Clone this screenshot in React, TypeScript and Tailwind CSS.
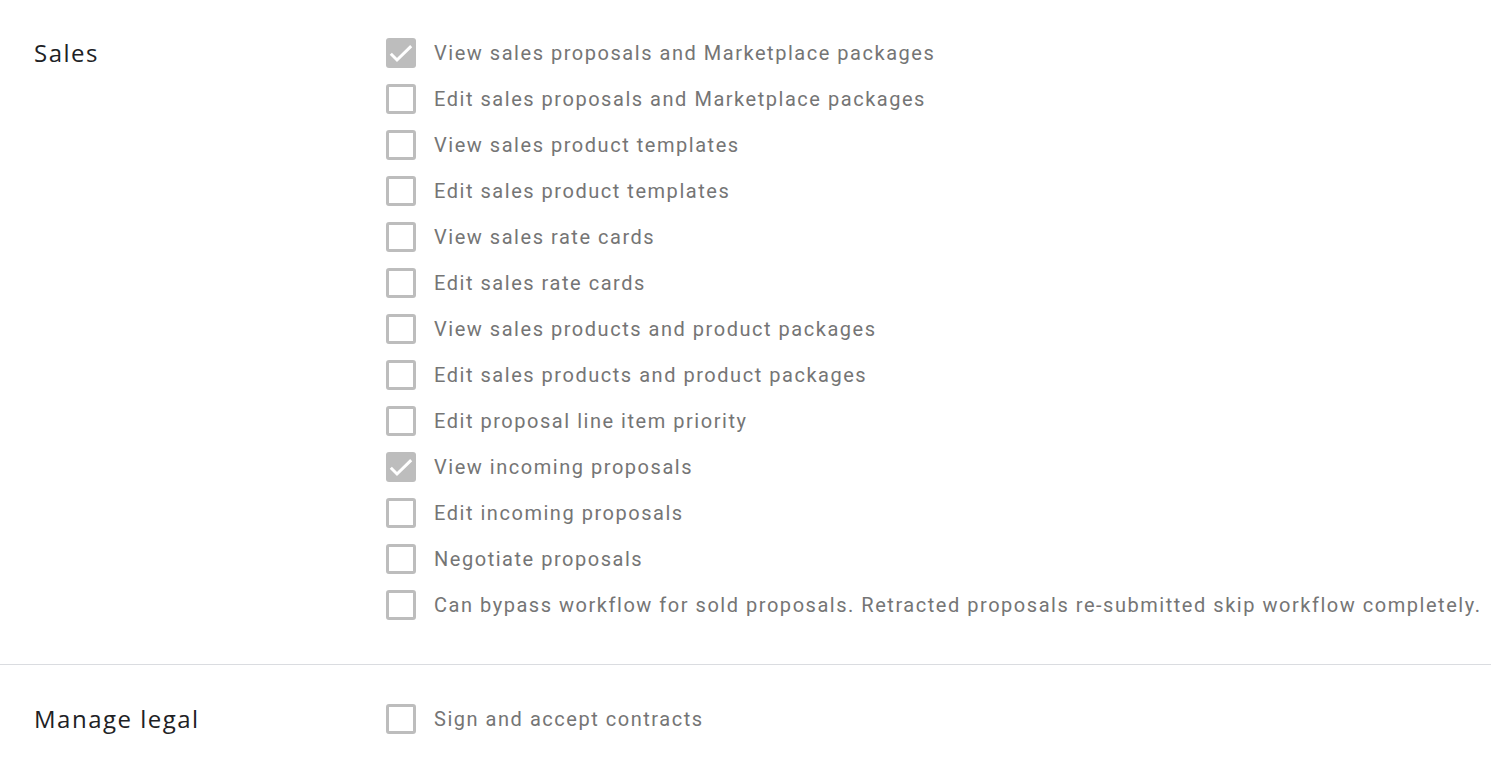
import React from 'react';

type Perm = { label: string; checked?: boolean };

const sales: Perm[] = [
  { label: 'View sales proposals and Marketplace packages', checked: true },
  { label: 'Edit sales proposals and Marketplace packages' },
  { label: 'View sales product templates' },
  { label: 'Edit sales product templates' },
  { label: 'View sales rate cards' },
  { label: 'Edit sales rate cards' },
  { label: 'View sales products and product packages' },
  { label: 'Edit sales products and product packages' },
  { label: 'Edit proposal line item priority' },
  { label: 'View incoming proposals', checked: true },
  { label: 'Edit incoming proposals' },
  { label: 'Negotiate proposals' },
  { label: 'Can bypass workflow for sold proposals. Retracted proposals re-submitted skip workflow completely.' },
];

function Box({ checked }: { checked?: boolean }) {
  if (checked) {
    return (
      <div className="w-[30px] h-[30px] rounded-[3px] bg-[#bdbdbd] shrink-0">
        <svg width="30" height="30" viewBox="0 0 30 30" fill="none">
          <path d="M4.8 15.8l6.2 6.2L25.2 8.2" stroke="#fff" strokeWidth="3" />
        </svg>
      </div>
    );
  }
  return <div className="w-[30px] h-[30px] rounded-[3px] border-[3px] border-[#bdbdbd] shrink-0" />;
}

function Row({ p }: { p: Perm }) {
  return (
    <div className="h-[46px] flex items-center">
      <div className="w-[48px]">
        <Box checked={p.checked} />
      </div>
      <span className="text-[20px] tracking-[1.53px] text-[#757575] whitespace-nowrap">{p.label}</span>
    </div>
  );
}

function Section({ title, items, className }: { title: string; items: Perm[]; className: string }) {
  return (
    <div className={`flex ${className}`}>
      <div
        className="w-[386px] pl-[34px] h-[46px] flex items-center text-[24px] tracking-[1.5px] text-[#202124]"
        style={{ fontFamily: '"Open Sans", Roboto, sans-serif' }}
      >
        {title}
      </div>
      <div className="flex flex-col">
        {items.map((p) => (
          <Row key={p.label} p={p} />
        ))}
      </div>
    </div>
  );
}

export default function App() {
  return (
    <div className="w-[1491px] h-[773px] bg-white overflow-hidden" style={{ fontFamily: 'Roboto, "Noto Sans", sans-serif' }}>
      <Section title="Sales" items={sales} className="pt-[30px] pb-[36px] border-b border-[#dadce0]" />
      <Section title="Manage legal" items={[{ label: 'Sign and accept contracts' }]} className="pt-[31px]" />
    </div>
  );
}
